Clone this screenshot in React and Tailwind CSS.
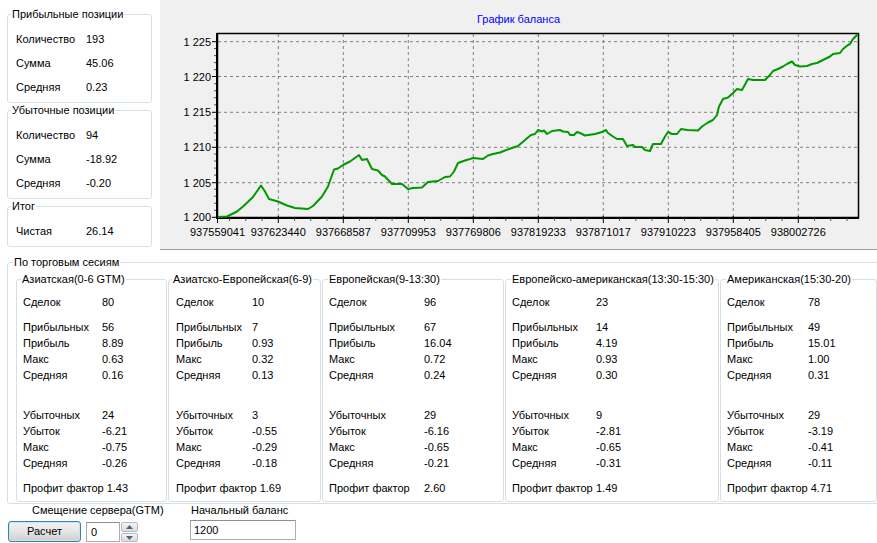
import React from "react";

const pts = [
  [218, 217], [227, 216.5], [237, 211.5], [243, 206.5], [253, 197], [261, 185.5], [265, 191.5], [269, 199],
  [278, 201.5], [287, 205.5], [295, 208], [308, 209], [313, 206], [322, 196.5], [328, 186.5], [334, 169.5],
  [338, 168.5], [343, 165], [350, 161.5], [359, 155], [362, 160], [367, 159], [372, 169], [378, 170.5],
  [382, 175], [385, 176.5], [392, 184], [402, 184], [408, 189], [413, 188], [422, 187.5], [428, 182],
  [438, 181], [445, 177], [450, 176.5], [454, 171.5], [458, 163], [465, 160.5], [470, 159], [473, 158],
  [483, 159], [488, 155.5], [493, 154], [500, 152.5], [505, 150.5], [512, 148], [518, 146], [525, 140],
  [531, 135], [535, 134], [538, 130], [542, 131.5], [544, 130.5], [547, 134], [552, 131], [560, 130],
  [563, 131.5], [568, 132], [570, 135], [574, 135], [577, 132], [580, 133], [585, 135.5], [595, 134],
  [602, 132], [606, 130], [608, 133], [613, 136.5], [617, 139], [623, 139], [627, 146], [630, 145.5],
  [633, 145], [635, 147], [642, 147], [645, 150], [650, 151], [653, 144], [661, 144], [665, 136.5],
  [668, 132], [672, 134], [677, 134], [681, 129], [687, 130], [698, 130.5], [702, 126.5], [708, 122.5],
  [713, 120], [717, 115], [719, 106.5], [723, 99], [728, 97.5], [733, 93], [737, 89], [742, 90],
  [748, 79], [753, 80], [765, 80], [770, 75], [773, 71], [778, 69], [783, 66.5], [787, 64],
  [792, 61.5], [795, 65], [800, 66.5], [807, 66], [812, 64], [817, 63], [822, 60.5], [825, 59],
  [830, 56.5], [833, 54], [840, 53], [843, 49], [848, 45], [850, 44], [853, 39], [858, 34],
];

const yTicks = [
  ["1 200", 217.3], ["1 205", 182.7], ["1 210", 147.3], ["1 215", 112.3], ["1 220", 76.5], ["1 225", 41.7],
];

const xTicks = [
  ["937559041", 217.5], ["937623440", 278.3], ["937668587", 343.3], ["937709953", 408.3], ["937769806", 473.3],
  ["937819233", 538.3], ["937871017", 603.3], ["937910223", 668.3], ["937958405", 733.3], ["938002726", 798.3],
];

const labels = ["Сделок", "Прибыльных", "Прибыль", "Макс", "Средняя", "Убыточных", "Убыток", "Макс", "Средняя", "Профит фактор"];

const sessions = [
  { title: "Азиатская(0-6 GTM)", w: "w-[151px]", pl: "pl-[6px]", lg: "ml-[4px]", col: "min-w-[79px]",
    v: ["80", "56", "8.89", "0.63", "0.16", "24", "-6.21", "-0.75", "-0.26", "1.43"] },
  { title: "Азиатско-Европейская(6-9)", w: "w-[153px]", pl: "pl-[7px]", lg: "ml-[3px]", col: "min-w-[76px]",
    v: ["10", "7", "0.93", "0.32", "0.13", "3", "-0.55", "-0.29", "-0.18", "1.69"] },
  { title: "Европейская(9-13:30)", w: "w-[182px]", pl: "pl-[6px]", lg: "ml-[5px]", col: "min-w-[95px]",
    v: ["96", "67", "16.04", "0.72", "0.24", "29", "-6.16", "-0.65", "-0.21", "2.60"] },
  { title: "Европейско-американская(13:30-15:30)", w: "w-[214px]", pl: "pl-[6px]", lg: "ml-[5px]", col: "min-w-[84px]",
    v: ["23", "14", "4.19", "0.93", "0.30", "9", "-2.81", "-0.65", "-0.31", "1.49"] },
  { title: "Американская(15:30-20)", w: "w-[157px]", pl: "pl-[6px]", lg: "ml-[5px]", col: "min-w-[81px]",
    v: ["78", "49", "15.01", "1.00", "0.31", "29", "-3.19", "-0.41", "-0.11", "4.71"] },
];

const Row = ({ label, value, col, className = "" }) => (
  <div className={`flex whitespace-nowrap ${className}`}>
    <span className={`${col} pr-[3px]`}>{label}</span>
    <span>{value}</span>
  </div>
);

const SummaryBox = ({ title, rows, className }) => (
  <fieldset className={`w-[145px] border border-[#d5dfe5] rounded-[3px] ${className}`}>
    <legend className="ml-[3px] px-[1px] leading-[13px]">{title}</legend>
    <div className="pl-[8px] pt-[6px] pb-[3px]">
      {rows.map(([l, v]) => (
        <Row key={l} label={l} value={v} col="min-w-[70px]" className="leading-[24px]" />
      ))}
    </div>
  </fieldset>
);

const SessionBox = ({ s }) => (
  <fieldset className={`${s.w} shrink-0 border border-[#d5dfe5] rounded-[3px]`}>
    <legend className={`${s.lg} px-[1px] leading-[13px] whitespace-nowrap`}>{s.title}</legend>
    <div className={`${s.pl} pt-[8px] pb-[5px] leading-[16px]`}>
      <Row label={labels[0]} value={s.v[0]} col={s.col} />
      <div className="mt-[9px]">
        {[1, 2, 3, 4].map((i) => <Row key={i} label={labels[i]} value={s.v[i]} col={s.col} />)}
      </div>
      <div className="mt-[24px]">
        {[5, 6, 7, 8].map((i) => <Row key={i} label={labels[i]} value={s.v[i]} col={s.col} />)}
      </div>
      <Row className="mt-[9px]" label={labels[9]} value={s.v[9]} col={s.col} />
    </div>
  </fieldset>
);

const Chart = () => {
  const minorX = [];
  for (let k = 1; k < 40; k++) {
    const x = 213.3 + k * 16.25;
    if (x > 858) break;
    if (k % 4 !== 0) minorX.push(x);
  }
  const minorY = [];
  for (let k = 1; k < 26; k++) {
    const y = 217.3 - k * 7.03;
    if (y < 34) break;
    if (k % 5 !== 0) minorY.push(y);
  }
  return (
    <div className="w-[717px] h-[250px] shrink-0 bg-[#f0f0f0] border-b border-[#a0a0a0] flex flex-col">
      <div className="h-[26px] pt-[13px] leading-[13px] text-center text-[#0000ff]">График баланса</div>
      <svg width="717" height="223" className="block">
        <g transform="translate(-160,-26)" fontFamily="'Liberation Sans', Arial, sans-serif" fontSize="11">
          {yTicks.slice(1).map(([t, y]) => (
            <line key={t} x1="218" x2="858" y1={y} y2={y} stroke="#808080" strokeDasharray="3 3" />
          ))}
          {xTicks.slice(1).map(([t, x]) => (
            <line key={t} x1={x} x2={x} y1="34" y2="217" stroke="#808080" strokeDasharray="3 3" />
          ))}
          <rect x="217.5" y="33.5" width="641" height="184" fill="none" stroke="#000" strokeWidth="1.5" />
          <line x1="217" x2="217" y1="33" y2="219" stroke="#000" strokeWidth="2" />
          <line x1="216" x2="859" y1="218" y2="218" stroke="#000" strokeWidth="2" />
          {minorX.map((x) => (
            <line key={x} x1={x} x2={x} y1="218" y2="221" stroke="#555" />
          ))}
          {xTicks.map(([t, x]) => (
            <line key={t} x1={x} x2={x} y1="216" y2="223" stroke="#000" />
          ))}
          {minorY.map((y) => (
            <line key={y} x1="214" x2="216" y1={y} y2={y} stroke="#555" />
          ))}
          {yTicks.map(([t, y]) => (
            <line key={t} x1="212" x2="217" y1={y} y2={y} stroke="#000" />
          ))}
          {yTicks.map(([t, y]) => (
            <text key={t} x="211" y={y + 4} textAnchor="end" fill="#000">{t}</text>
          ))}
          {xTicks.map(([t, x]) => (
            <text key={t} x={x} y="235.5" textAnchor="middle" fill="#000">{t}</text>
          ))}
          <polyline points={pts.map((p) => p.join(",")).join(" ")} fill="none" stroke="#009900" strokeWidth="2" strokeLinejoin="round" />
        </g>
      </svg>
    </div>
  );
};

const Arrow = ({ up }) => (
  <svg width="7" height="4" viewBox="0 0 7 4">
    <path d={up ? "M0 4 L3.5 0 L7 4 Z" : "M0 0 L3.5 4 L7 0 Z"} fill="#4d6185" />
  </svg>
);

export default function App() {
  return (
    <div className="w-[877px] h-[543px] overflow-hidden bg-white text-black text-[11px] font-['Liberation_Sans',Arial,sans-serif]">
      <div className="flex h-[250px]">
        <div className="w-[160px] shrink-0 pl-[7px]">
          <SummaryBox className="mt-[8px]" title="Прибыльные позиции"
            rows={[["Количество", "193"], ["Сумма", "45.06"], ["Средняя", "0.23"]]} />
          <SummaryBox className="mt-[1px]" title="Убыточные позиции"
            rows={[["Количество", "94"], ["Сумма", "-18.92"], ["Средняя", "-0.20"]]} />
          <SummaryBox className="mt-[1px]" title="Итог" rows={[["Чистая", "26.14"]]} />
        </div>
        <Chart />
      </div>

      <fieldset className="ml-[7px] mt-[6px] w-[880px] border border-[#d5dfe5] rounded-[3px]">
        <legend className="ml-[5px] px-[1px] leading-[13px]">По торговым сесиям</legend>
        <div className="flex gap-[1px] pl-[8px] pt-[4px] pb-[1px]">
          {sessions.map((s) => <SessionBox key={s.title} s={s} />)}
        </div>
      </fieldset>

      <div className="flex leading-[13px] whitespace-nowrap">
        <span className="ml-[32px] w-[159px]">Смещение сервера(GTM)</span>
        <span>Начальный баланс</span>
      </div>
      <div className="flex items-start mt-[3px]">
        <button className="ml-[8px] mt-[1px] w-[73px] h-[21px] rounded-[3px] border border-[#3c7fb1] bg-linear-to-b from-[#f2f2f2] via-[#e6e6e6] to-[#cfcfcf] shadow-[inset_0_0_0_1px_#c4e5f6] leading-[19px] text-center">
          Расчет
        </button>
        <div className="ml-[5px] mt-[2px] flex">
          <div className="w-[34px] h-[20px] border border-[#abadb3] border-t-[#8e8f8f] bg-white pl-[4px] leading-[18px]">0</div>
          <div className="ml-[1px] w-[17px] h-[20px] flex flex-col gap-[1px]">
            <div className="h-[10px] flex items-center justify-center rounded-[2px] border border-[#b8bcc2] bg-linear-to-b from-[#f4f4f4] to-[#dcdcdc]">
              <Arrow up />
            </div>
            <div className="h-[9px] flex items-center justify-center rounded-[2px] border border-[#b8bcc2] bg-linear-to-b from-[#f4f4f4] to-[#dcdcdc]">
              <Arrow />
            </div>
          </div>
        </div>
        <div className="ml-[52px] w-[106px] h-[20px] border border-[#abadb3] border-t-[#8e8f8f] bg-white pl-[3px] leading-[18px]">1200</div>
      </div>
    </div>
  );
}
